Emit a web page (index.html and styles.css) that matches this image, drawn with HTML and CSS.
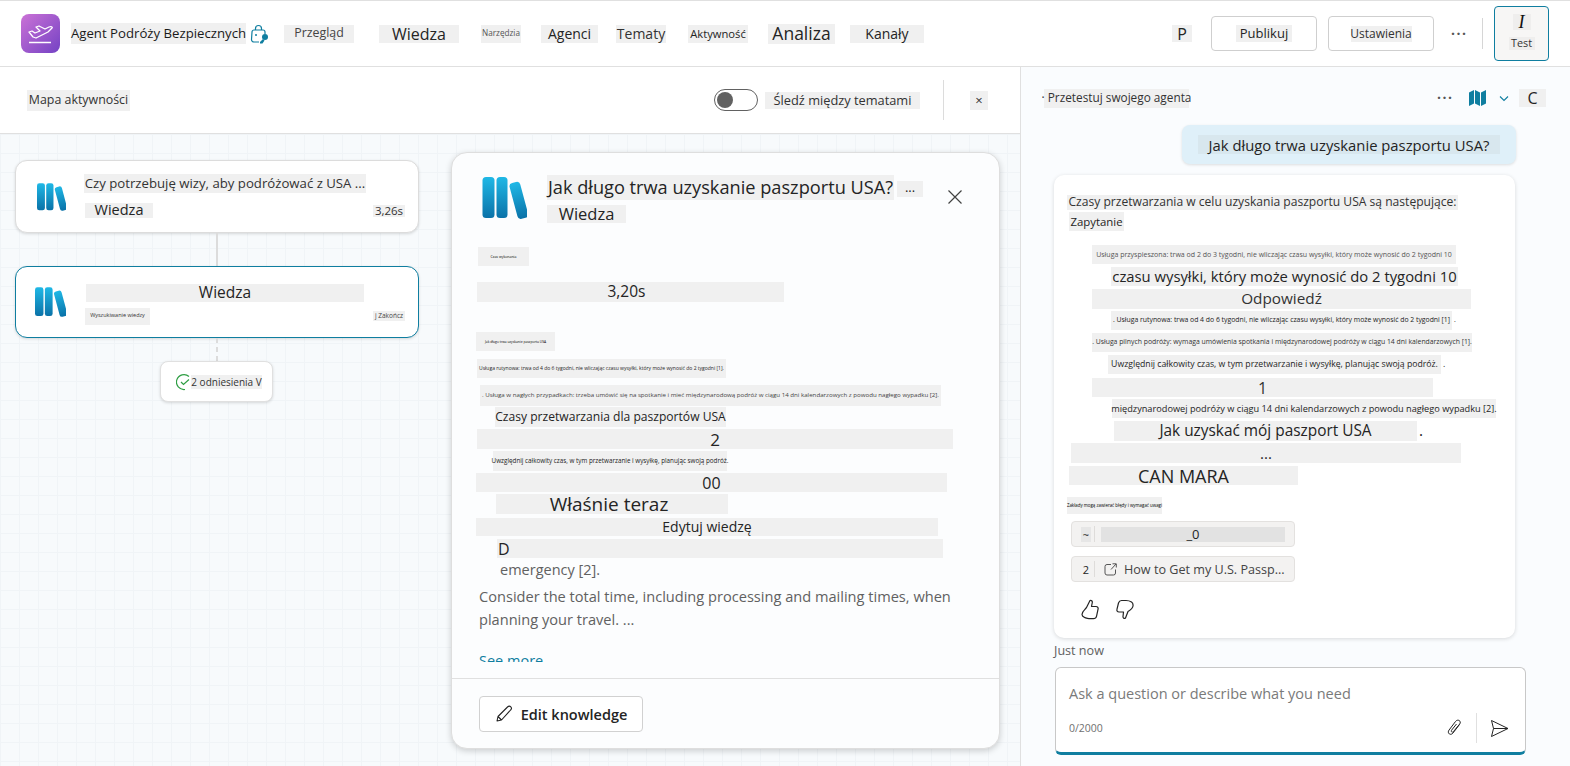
FILE: index.html
```html
<!DOCTYPE html>
<html lang="pl">
<head>
    <meta charset="UTF-8">
    <meta name="viewport" content="width=device-width, initial-scale=1.0">
    <title>Agent Podróży Bezpiecznych</title>
    <link rel="stylesheet" href="styles.css">
</head>
<body>
<svg class="defs" width="0" height="0">
    <defs>
        <linearGradient id="book" x1="0" y1="0" x2="0" y2="1">
            <stop offset="0" stop-color="#1fb8e6"/>
            <stop offset="1" stop-color="#0a72a8"/>
        </linearGradient>
        <linearGradient id="app" x1="0" y1="0" x2="1" y2="1">
            <stop offset="0" stop-color="#cb72d6"/>
            <stop offset="1" stop-color="#7442c4"/>
        </linearGradient>
        <symbol id="books" viewBox="0 0 44 42">
            <rect x="0" y="0" width="12" height="41" rx="3.5" fill="url(#book)"/>
            <rect x="14" y="0" width="11" height="41" rx="3.5" fill="url(#book)"/>
            <rect x="31" y="5" width="11" height="37" rx="3.5" fill="url(#book)" transform="rotate(-15 36 24)"/>
        </symbol>
    </defs>
</svg>

<header class="topbar">
    <div class="app-icon">
        <svg width="39" height="39" viewBox="0 0 39 39">
            <rect width="39" height="39" rx="8" fill="url(#app)"/>
            <path d="M8 18l3-1 3 2 5-2-4-4 3-1 6 3 4-2c2-1 4 0 3 1l-4 4-12 6-3-1z" fill="none" stroke="#fff" stroke-width="1.3" stroke-linejoin="round"/>
            <path d="M8 28.500h22" stroke="#fff" stroke-width="1.5"/>
        </svg>
    </div>
    <span class="tag app-name">Agent Podróży Bezpiecznych</span>
    <svg class="lock-icon" width="19" height="20" viewBox="0 0 19 20">
        <path d="M5.500 6V4.500a3 3 0 0 1 6 0V6" fill="none" stroke="#0f7ea0" stroke-width="1.2"/>
        <path d="M9 18H4a2.500 2.500 0 0 1-2.500-2.500L2 8a2 2 0 0 1 2-2h9a2 2 0 0 1 2 2v2" fill="none" stroke="#0f7ea0" stroke-width="1.2"/>
        <circle cx="6" cy="11" r="1" fill="#0f7ea0"/>
        <circle cx="15" cy="13" r="3" fill="#0f7ea0"/>
        <path d="M13 15l-3 3v1.500h2.500l2-3z" fill="#0f7ea0"/>
    </svg>
    <nav class="tabs">
        <span class="tag tab tab-overview">Przegląd</span>
        <span class="tag tab tab-knowledge">Wiedza</span>
        <span class="tag tab tab-tools">Narzędzia</span>
        <span class="tag tab tab-agents">Agenci</span>
        <span class="tag tab tab-topics">Tematy</span>
        <span class="tag tab tab-activity">Aktywność</span>
        <span class="tag tab tab-analytics">Analiza</span>
        <span class="tag tab tab-channels">Kanały</span>
    </nav>
    <div class="top-actions">
        <span class="tag top-p">P</span>
        <button class="btn btn-publish"><span class="tag">Publikuj</span></button>
        <button class="btn btn-settings"><span class="tag">Ustawienia</span></button>
        <span class="dots top-dots">···</span>
        <span class="top-divider"></span>
        <button class="btn-test">
            <span class="tag test-glyph">I</span>
            <span class="tag test-label">Test</span>
        </button>
    </div>
</header>

<main class="workspace">
    <section class="map-pane">
        <div class="map-head">
            <span class="tag map-title">Mapa aktywności</span>
            <span class="toggle"><span class="knob"></span></span>
            <span class="tag toggle-label">Śledź między tematami</span>
            <span class="map-divider"></span>
            <span class="tag map-close">×</span>
        </div>
        <div class="canvas">
            <div class="nodes">
                <div class="node">
                    <svg class="node-icon"><use href="#books"/></svg>
                    <div class="node-text">
                        <span class="tag node-question">Czy potrzebuję wizy, aby podróżować z USA ...</span>
                        <div class="node-meta">
                            <span class="tag node-kind">Wiedza</span>
                            <span class="tag node-time">3,26s</span>
                        </div>
                    </div>
                </div>
                <div class="link"></div>
                <div class="node node-active">
                    <svg class="node-icon"><use href="#books"/></svg>
                    <div class="node-text">
                        <span class="tag node-heading">Wiedza</span>
                        <div class="node-meta node-meta-low">
                            <span class="tag node-tiny">Wyszukiwanie wiedzy</span>
                            <span class="tag node-done">j Zakończ</span>
                        </div>
                    </div>
                </div>
                <div class="link link-dashed"></div>
                <div class="chip">
                    <svg width="16" height="18" viewBox="0 0 16 18">
                        <path d="M13 3.500A7.500 7.500 0 1 0 9 16.500" fill="none" stroke="#2f9e44" stroke-width="1.2"/>
                        <path d="M5 9l2.500 2.500L13 6.500" fill="none" stroke="#2f9e44" stroke-width="1.2"/>
                    </svg>
                    <span class="tag chip-label">2 odniesienia V</span>
                </div>
            </div>

            <aside class="detail">
                <div class="detail-head">
                    <svg class="detail-icon"><use href="#books"/></svg>
                    <div class="detail-titles">
                        <div class="detail-title-row">
                            <span class="tag detail-title">Jak długo trwa uzyskanie paszportu USA?</span>
                            <span class="tag detail-more">...</span>
                        </div>
                        <span class="tag detail-kind">Wiedza</span>
                    </div>
                    <svg class="detail-close" width="16" height="16" viewBox="0 0 16 16">
                        <path d="M1.500 1.500l13 13M14.500 1.500l-13 13" stroke="#424242" stroke-width="1.200"/>
                    </svg>
                </div>
                <div class="detail-body">
                    <span class="strip d1">Czas wykonania</span>
                    <span class="strip d2">3,20s</span>
                    <span class="strip d3">Jak długo trwa uzyskanie paszportu USA</span>
                    <span class="strip d4">Usługa rutynowa: trwa od 4 do 6 tygodni, nie wliczając czasu wysyłki, który może wynosić do 2 tygodni [1].</span>
                    <span class="strip d5">. Usługa w nagłych przypadkach: trzeba umówić się na spotkanie i mieć międzynarodową podróż w ciągu 14 dni kalendarzowych z powodu nagłego wypadku [2].</span>
                    <span class="strip d6">Czasy przetwarzania dla paszportów USA</span>
                    <span class="strip d7">2</span>
                    <span class="strip d8">Uwzględnij całkowity czas, w tym przetwarzanie i wysyłkę, planując swoją podróż.</span>
                    <span class="strip d9">00</span>
                    <span class="strip d10">Właśnie teraz</span>
                    <span class="strip d11">Edytuj wiedzę</span>
                    <span class="strip d12">D</span>
                    <p class="detail-emergency">emergency [2].</p>
                    <p class="detail-para">Consider the total time, including processing and mailing times, when planning your travel. ...</p>
                    <a class="see-more">See more</a>
                </div>
                <div class="detail-foot">
                    <button class="btn-edit">
                        <svg width="18" height="18" viewBox="0 0 18 18">
                            <path d="M2 16l1-4.500L12.500 2c1-1 2.500-1 3.300-.2s.8 2.200-.2 3.200L6.500 15z M3 11.500L6.500 15" fill="none" stroke="#242424" stroke-width="1.100" stroke-linejoin="round"/>
                        </svg>
                        Edit knowledge
                    </button>
                </div>
            </aside>
        </div>
    </section>

    <section class="test-pane">
        <div class="test-head">
            <span class="tag test-title">· Przetestuj swojego agenta</span>
            <span class="dots test-dots">···</span>
            <svg class="map-icon" width="17" height="16" viewBox="0 0 17 16">
                <path d="M0 2.500L5 0v13.500L0 16zM6 0l5 2.500V16l-5-2.500zM12 2.500L17 0v13.500L12 16z" fill="#0f7ea0"/>
            </svg>
            <svg class="chev" width="12" height="7" viewBox="0 0 12 7">
                <path d="M2 1.500l4 4 4-4" fill="none" stroke="#0f7ea0" stroke-width="1.100"/>
            </svg>
            <span class="tag test-c">C</span>
        </div>
        <div class="bubble"><span class="bubble-text">Jak długo trwa uzyskanie paszportu USA?</span></div>
        <article class="answer">
            <span class="strip a1">Czasy przetwarzania w celu uzyskania paszportu USA są następujące:</span>
            <span class="strip a2">Zapytanie</span>
            <span class="strip a3">Usługa przyspieszona: trwa od 2 do 3 tygodni, nie wliczając czasu wysyłki, który może wynosić do 2 tygodni 10</span>
            <span class="strip a4">czasu wysyłki, który może wynosić do 2 tygodni 10</span>
            <span class="strip a5">Odpowiedź</span>
            <span class="strip a6">. Usługa rutynowa: trwa od 4 do 6 tygodni, nie wliczając czasu wysyłki, który może wynosić do 2 tygodni [1]<span class="trail">.</span></span>
            <span class="strip a7">. Usługa pilnych podróży: wymaga umówienia spotkania i międzynarodowej podróży w ciągu 14 dni kalendarzowych [1].</span>
            <span class="strip a8">Uwzględnij całkowity czas, w tym przetwarzanie i wysyłkę, planując swoją podróż.<span class="trail">.</span></span>
            <span class="strip a9">1</span>
            <span class="strip a10">międzynarodowej podróży w ciągu 14 dni kalendarzowych z powodu nagłego wypadku [2].</span>
            <span class="strip a11">Jak uzyskać mój paszport USA<span class="trail">.</span></span>
            <span class="strip a12">...</span>
            <span class="strip a13">CAN MARA</span>
            <span class="strip a14">Zakłady mogą zawierać błędy i wymagać uwagi</span>
            <div class="cite cite-first">
                <span class="tag cite-num">~</span>
                <span class="cite-sep"></span>
                <span class="cite-blank">_0</span>
            </div>
            <div class="cite cite-second">
                <span class="cite-num">2</span>
                <span class="cite-sep"></span>
                <svg class="cite-link" width="13" height="13" viewBox="0 0 13 13">
                    <path d="M7 1.500H3A2 2 0 0 0 1 3.500v6.500a2 2 0 0 0 2 2h6.500a2 2 0 0 0 2-2V6.500M7 6.500l5-5.500M8.500 .8H12.300V4.500" fill="none" stroke="#555" stroke-width="1"/>
                </svg>
                <span class="cite-text">How to Get my U.S. Passp...</span>
            </div>
            <div class="feedback">
                <svg width="18" height="21" viewBox="0 0 18 21">
                    <path d="M5.500 8.500L9 1.500c1.300-.6 2.500.5 2.300 2L10.500 7.500h4.500c1.600 0 2.500 1.300 2 2.800l-1.500 7c-.4 1.500-1.500 2.300-3 2.300H8c-2 0-3-.7-4.500-1.200-1.500-.7-2.500-1.500-2.500-3 0-2 1.500-3.500 2.500-4.500z" fill="none" stroke="#242424" stroke-width="1.200" stroke-linejoin="round"/>
                </svg>
                <svg width="18" height="21" viewBox="0 0 18 21">
                    <path d="M12 12.500L9.500 19c-1.300 1-2.700 0-2.500-1.500l.5-4.500H3c-1.600 0-2.500-1.300-2-2.800L2.500 4C3 2.500 4 1.500 5.500 1.500H10c2 0 4 .5 5.500 1.500 1.500 1 1.700 2.500 1.500 4-.3 2-2 3.700-5 5.500z" fill="none" stroke="#242424" stroke-width="1.200" stroke-linejoin="round"/>
                </svg>
            </div>
        </article>
        <div class="timestamp">Just now</div>
        <div class="composer">
            <div class="composer-hint">Ask a question or describe what you need</div>
            <div class="composer-row">
                <span class="composer-count">0/2000</span>
                <svg class="clip" width="15" height="18" viewBox="0 0 15 18">
                    <path d="M12.500 5.500L6 14c-1 1.300-2.500 1.700-3.700.9s-1.300-2.500-.3-3.800L8.500 2.500c1-1.300 2.500-1.700 3.700-1s1.500 2.300.5 3.500L6.500 12.500c-.5.700-1.300.8-1.800.4s-.5-1.200 0-1.900L9.500 5" fill="none" stroke="#242424" stroke-width="1"/>
                </svg>
                <span class="composer-sep"></span>
                <svg class="send" width="19" height="19" viewBox="0 0 19 19">
                    <path d="M1.500 1.500L18 9.500 1.500 17.500 3.500 9.500zM3.500 9.500H18" fill="none" stroke="#242424" stroke-width="1" stroke-linejoin="round"/>
                </svg>
            </div>
        </div>
    </section>
</main>
</body>
</html>
```

FILE: styles.css
```css
* {
    box-sizing: border-box;
}

html, body {
    margin: 0;
    height: 766px;
    overflow: hidden;
}

body {
    font-family: "Open Sans", "Noto Sans", sans-serif;
    color: #242424;
    background: #fff;
    font-size: 14px;
}

button {
    font-family: inherit;
    cursor: pointer;
}

.defs {
    position: absolute;
}

/* grey boxes behind the translated labels */
.tag,
.strip {
    background: #f0f0f0;
    display: flex;
    align-items: center;
    justify-content: center;
    white-space: nowrap;
    flex-shrink: 0;
    line-height: 1;
}

.dots {
    font-size: 14px;
    font-weight: 700;
    letter-spacing: 1.500px;
    line-height: 1;
    color: #555;
    white-space: nowrap;
}

/* top bar */
.topbar {
    height: 67px;
    border-top: 1px solid #e0e0e0;
    border-bottom: 1px solid #e0e0e0;
    display: flex;
    align-items: center;
    padding-left: 21px;
}

.app-icon {
    width: 39px;
    height: 39px;
    flex-shrink: 0;
}

.app-name {
    margin-left: 11px;
    width: 175px;
    height: 21px;
    font-size: 13.200px;
    color: #1a1a1a;
}

.lock-icon {
    margin-left: 4px;
    flex-shrink: 0;
}

.tabs {
    display: flex;
    align-items: center;
}

.tab {
    height: 18px;
}

.tab-overview { margin-left: 15px; width: 70px; font-size: 12.400px; color: #444; }
.tab-knowledge { margin-left: 25px; width: 80px; font-size: 16px; }
.tab-tools { margin-left: 22px; width: 40px; font-size: 8.200px; color: #555; }
.tab-agents { margin-left: 20px; width: 57px; font-size: 14px; }
.tab-topics { margin-left: 18px; width: 50px; font-size: 14px; color: #333; }
.tab-activity { margin-left: 22px; width: 60px; font-size: 11.200px; }
.tab-analytics { margin-left: 20px; width: 67px; height: 20px; font-size: 17.500px; }
.tab-channels { margin-left: 15px; width: 74px; font-size: 14px; }

.top-actions {
    margin-left: auto;
    padding-right: 21px;
    display: flex;
    align-items: center;
}

.top-p {
    width: 20px;
    height: 17px;
    font-size: 16px;
}

.btn {
    height: 35px;
    background: #fff;
    border: 1px solid #cfcfcf;
    border-radius: 4px;
    display: flex;
    align-items: center;
    justify-content: center;
    padding: 0;
    color: #242424;
}

.btn-publish {
    margin-left: 19px;
    width: 106px;
    font-size: 13px;
}

.btn-publish .tag {
    width: 56px;
    height: 17px;
}

.btn-settings {
    margin-left: 11px;
    width: 106px;
    font-size: 12px;
    color: #333;
}

.btn-settings .tag {
    width: 61px;
    height: 16px;
}

.top-dots {
    margin-left: 17px;
    width: 15px;
}

.top-divider {
    margin-left: 16px;
    width: 1px;
    height: 31px;
    background: #d6d6d6;
}

.btn-test {
    margin-left: 11px;
    width: 55px;
    height: 55px;
    border: 1px solid #0f7ea0;
    border-radius: 4px;
    background: #f7f6f5;
    display: flex;
    flex-direction: column;
    align-items: center;
    padding: 7px 0 0;
    color: #333;
}

.test-glyph {
    width: 18px;
    height: 16px;
    font-family: "Liberation Serif", serif;
    font-style: italic;
    font-size: 18px;
    color: #111;
    background: #efeeed;
}

.test-label {
    margin-top: 7px;
    width: 26px;
    height: 13px;
    font-size: 10.800px;
    background: #efeeed;
}

/* main area */
.workspace {
    display: grid;
    grid-template-columns: 1021px 549px;
    height: 699px;
}

.map-pane {
    display: flex;
    flex-direction: column;
    border-right: 1px solid #e0e0e0;
    min-height: 0;
}

.map-head {
    height: 67px;
    flex-shrink: 0;
    border-bottom: 1px solid #e0e0e0;
    display: flex;
    align-items: center;
    padding-left: 27px;
}

.map-title {
    width: 103px;
    height: 21px;
    font-size: 12.400px;
    color: #333;
}

.toggle {
    margin-left: 584px;
    width: 44px;
    height: 22px;
    border: 1px solid #616161;
    border-radius: 11px;
    display: flex;
    align-items: center;
    padding-left: 2px;
}

.knob {
    width: 16px;
    height: 16px;
    border-radius: 50%;
    background: #616161;
}

.toggle-label {
    margin-left: 7px;
    width: 155px;
    height: 17px;
    font-size: 12.800px;
    color: #333;
}

.map-divider {
    margin-left: 23px;
    width: 1px;
    height: 40px;
    background: #dcdcdc;
}

.map-close {
    margin-left: 26px;
    width: 18px;
    height: 19px;
    font-size: 13px;
    color: #333;
}

.canvas {
    position: relative;
    flex: 1;
    min-height: 0;
    background-color: #f7fafc;
    background-image:
        linear-gradient(#f0f4f7 1px, transparent 1px),
        linear-gradient(90deg, #f0f4f7 1px, transparent 1px);
    background-size: 19px 19px;
}

.nodes {
    width: 404px;
    margin-left: 15px;
    padding-top: 26px;
    display: flex;
    flex-direction: column;
}

.node {
    height: 73px;
    background: #fff;
    border: 1px solid #dcdcdc;
    border-radius: 12px;
    box-shadow: 0 1px 3px rgba(0, 0, 0, .14);
    display: flex;
    align-items: center;
    flex-shrink: 0;
}

.node-active {
    height: 72px;
    border-color: #0f7ea0;
}

.node-icon {
    margin-left: 21px;
    width: 29px;
    height: 28px;
    flex-shrink: 0;
}

.node-active .node-icon {
    margin-left: 19px;
    width: 31px;
    height: 30px;
}

.node-text {
    margin-left: 18px;
    width: 321px;
}

.node-active .node-text {
    margin-top: 4px;
}

.node-question {
    width: 282px;
    height: 19px;
    font-size: 13.200px;
    color: #333;
}

.node-meta {
    margin-top: 9px;
    height: 17px;
    display: flex;
    align-items: center;
    justify-content: space-between;
}

.node-kind {
    margin-left: 1px;
    width: 68px;
    height: 15px;
    font-size: 14.500px;
}

.node-time {
    width: 32px;
    height: 12px;
    font-size: 11.500px;
    color: #333;
}

.node-heading {
    margin-left: 2px;
    width: 278px;
    height: 18px;
    font-size: 15.500px;
}

.node-meta-low {
    margin-top: 6px;
}

.node-tiny {
    margin-left: 1px;
    width: 65px;
    height: 17px;
    font-size: 5.500px;
    color: #333;
}

.node-done {
    width: 32px;
    height: 10px;
    font-size: 6.500px;
    color: #444;
}

.link {
    margin-left: 201px;
    width: 2px;
    height: 33px;
    background: #dcdcdc;
}

.link-dashed {
    height: 23px;
    background: repeating-linear-gradient(#dcdcdc 0 5px, transparent 5px 9px);
}

.chip {
    margin-left: 145px;
    width: 113px;
    height: 41px;
    background: #fff;
    border: 1px solid #e0e0e0;
    border-radius: 8px;
    box-shadow: 0 1px 3px rgba(0, 0, 0, .14);
    display: flex;
    align-items: center;
    padding-left: 15px;
}

.chip-label {
    margin-left: -1px;
    width: 71px;
    height: 14px;
    font-size: 10px;
    color: #333;
}

/* knowledge card floating over the map */
.detail {
    position: absolute;
    left: 451px;
    top: 18px;
    width: 549px;
    height: 597px;
    background: #fcfdfe;
    border: 1px solid #dedede;
    border-radius: 16px;
    box-shadow: 0 2px 6px rgba(0, 0, 0, .18);
    display: flex;
    flex-direction: column;
}

.detail-head {
    position: relative;
    flex-shrink: 0;
    height: 71px;
    padding: 22px 0 0 30px;
    display: flex;
    align-items: flex-start;
}

.detail-icon {
    margin-top: 2px;
    width: 45px;
    height: 42px;
    flex-shrink: 0;
}

.detail-titles {
    margin-left: 20px;
}

.detail-title-row {
    display: flex;
    align-items: flex-start;
}

.detail-title {
    width: 347px;
    height: 25px;
    font-size: 18.200px;
}

.detail-more {
    margin: 6px 0 0 3px;
    width: 26px;
    height: 16px;
    font-size: 13px;
    align-items: flex-end;
    padding-bottom: 3px;
}

.detail-kind {
    margin-top: 5px;
    width: 79px;
    height: 18px;
    font-size: 16.500px;
}

.detail-close {
    position: absolute;
    right: 36px;
    top: 36px;
}

.detail-body {
    height: 438px;
    overflow: hidden;
    display: flex;
    flex-direction: column;
    align-items: flex-start;
    flex-shrink: 0;
}

.strip {
    position: relative;
}

.trail {
    position: absolute;
    left: 100%;
    margin-left: 2px;
}

/* rows of the card, left offset from the card edge */
.d1 { margin: 23px 0 0 26px; width: 51px; height: 19px; font-size: 3.500px; color: #000; }
.d2 { margin: 16px 0 0 25px; width: 307px; height: 20px; font-size: 15.500px; padding-right: 8px; }
.d3 { margin: 30px 0 0 24px; width: 79px; height: 19px; font-size: 3.300px; color: #000; }
.d4 { margin: 8px 0 0 25px; width: 249px; height: 19px; font-size: 5px; }
.d5 { margin: 7px 0 0 28px; width: 461px; height: 21px; font-size: 6.150px; color: #444; }
.d6 { margin: 1px 0 0 43px; width: 231px; height: 20px; font-size: 12.100px; }
.d7 { margin: 2px 0 0 25px; width: 476px; height: 20px; font-size: 17px; }
.d8 { margin: 2px 0 0 41px; width: 234px; height: 20px; font-size: 6.300px; }
.d9 { margin: 2px 0 0 24px; width: 471px; height: 19px; font-size: 16px; }
.d10 { margin: 2px 0 0 44px; width: 232px; height: 20px; font-size: 19px; padding-right: 6px; }
.d11 { margin: 4px 0 0 24px; width: 462px; height: 18px; font-size: 14px; }
.d12 { margin: 3px 0 0 45px; width: 446px; height: 19px; font-size: 16px; justify-content: flex-start; padding-left: 1px; }

.detail-emergency {
    margin: 2px 0 0 48px;
    line-height: 20px;
    font-size: 14.500px;
    color: #616161;
}

.detail-para {
    margin: 5px 0 0 27px;
    width: 490px;
    line-height: 23px;
    font-size: 14.600px;
    color: #616161;
}

/* the reference cuts this line off at the bottom of the scroll area */
.see-more {
    margin: 20px 0 0 27px;
    line-height: 20px;
    font-size: 14.500px;
    color: #0f7ea0;
}

.detail-foot {
    margin-top: 16px;
    border-top: 1px solid #e0e0e0;
    padding: 17px 0 0 27px;
}

.btn-edit {
    width: 164px;
    height: 36px;
    background: #fff;
    border: 1px solid #d1d1d1;
    border-radius: 4px;
    display: flex;
    align-items: center;
    justify-content: center;
    gap: 8px;
    font-size: 14.500px;
    font-weight: 600;
    color: #242424;
    padding: 0;
}

/* test panel */
.test-pane {
    background: #fafcfe;
    padding-top: 22px;
    display: flex;
    flex-direction: column;
    min-height: 0;
}

.test-head {
    height: 18px;
    padding: 0 24px 0 23px;
    display: flex;
    align-items: center;
}

.test-title {
    width: 145px;
    height: 19px;
    font-size: 11.800px;
    color: #333;
}

.test-dots {
    margin-left: auto;
    width: 15px;
}

.map-icon {
    margin-left: 17px;
}

.chev {
    margin-left: 12px;
}

.test-c {
    margin-left: 9px;
    width: 27px;
    height: 18px;
    font-size: 16px;
}

.bubble {
    margin: 18px 0 0 161px;
    width: 334px;
    height: 39px;
    background: #dff0f9;
    border-radius: 8px;
    box-shadow: 0 1px 3px rgba(0, 0, 0, .12);
    display: flex;
    align-items: center;
    justify-content: center;
}

.bubble-text {
    background: #d8e7ee;
    width: 302px;
    height: 19px;
    display: flex;
    align-items: center;
    justify-content: center;
    font-size: 14.800px;
    white-space: nowrap;
}

.answer {
    margin: 11px 0 0 33px;
    width: 461px;
    height: 463px;
    flex-shrink: 0;
    background: #fff;
    border-radius: 10px;
    box-shadow: 0 1px 4px rgba(0, 0, 0, .14);
    padding-top: 20px;
    display: flex;
    flex-direction: column;
    align-items: flex-start;
}

.a1 { margin: 0 0 0 13px; width: 391px; height: 15px; font-size: 12.100px; color: #333; }
.a2 { margin: 2px 0 0 15px; width: 55px; height: 19px; font-size: 11.400px; }
.a3 { margin: 14px 0 0 38px; width: 364px; height: 19px; font-size: 7px; color: #555; }
.a4 { margin: 3px 0 0 57px; width: 347px; height: 19px; font-size: 14.800px; }
.a5 { margin: 3px 0 0 38px; width: 379px; height: 20px; font-size: 15.300px; color: #333; }
.a6 { margin: 2px 0 0 57px; width: 341px; height: 19px; font-size: 6.850px; color: #222; }
.a7 { margin: 3px 0 0 38px; width: 380px; height: 19px; font-size: 6.850px; color: #333; }
.a8 { margin: 3px 0 0 54px; width: 333px; height: 19px; font-size: 8.700px; }
.a9 { margin: 4px 0 0 38px; width: 341px; height: 19px; font-size: 16px; color: #333; }
.a10 { margin: 2px 0 0 58px; width: 384px; height: 19px; font-size: 9.200px; }
.a11 { margin: 3px 0 0 60px; width: 303px; height: 20px; font-size: 15.400px; }
.a12 { margin: 2px 0 0 17px; width: 390px; height: 20px; font-size: 15px; align-items: flex-end; padding-bottom: 2px; }
.a13 { margin: 3px 0 0 15px; width: 229px; height: 19px; font-size: 18px; }
.a14 { margin: 12px 0 0 13px; width: 95px; height: 17px; font-size: 4.400px; color: #000; }

.cite {
    margin-left: 17px;
    width: 224px;
    height: 26px;
    background: #f3f2f1;
    border: 1px solid #e3e1df;
    border-radius: 4px;
    display: flex;
    align-items: center;
    flex-shrink: 0;
}

.cite-first {
    margin-top: 7px;
}

.cite-second {
    margin-top: 9px;
}

.cite-num {
    margin-left: 9px;
    width: 10px;
    height: 15px;
    font-size: 11px;
    text-align: center;
    background: #e6e6e6;
    line-height: 15px;
}

.cite-second .cite-num {
    background: none;
}

.cite-sep {
    margin-left: 3px;
    width: 1px;
    height: 16px;
    background: #dedcda;
}

.cite-blank {
    margin-left: 6px;
    width: 184px;
    height: 15px;
    background: #e2e2e2;
    font-size: 13px;
    line-height: 15px;
    text-align: center;
}

.cite-link {
    margin-left: 9px;
    flex-shrink: 0;
}

.cite-text {
    margin-left: 7px;
    font-size: 12.600px;
    color: #444;
    white-space: nowrap;
}

.feedback {
    margin: 17px 0 0 27px;
    display: flex;
    gap: 17px;
}

.timestamp {
    margin: 5px 0 0 33px;
    height: 16px;
    line-height: 16px;
    font-size: 12.600px;
    color: #616161;
}

.composer {
    margin: 8px 0 0 34px;
    width: 471px;
    height: 88px;
    background: #fff;
    border: 1px solid #c8c8c8;
    border-bottom: 3px solid #0f7ea0;
    border-radius: 6px;
    padding: 16px 0 0 13px;
}

.composer-hint {
    line-height: 20px;
    font-size: 14.500px;
    color: #7a7a7a;
}

.composer-row {
    margin-top: 8px;
    display: flex;
    align-items: center;
    height: 32px;
}

.composer-count {
    font-size: 10.500px;
    color: #707070;
}

.clip {
    margin-left: auto;
}

.composer-sep {
    margin-left: 14px;
    width: 1px;
    height: 30px;
    background: #e0e0e0;
}

.send {
    margin: 0 16px 0 13px;
}
```
